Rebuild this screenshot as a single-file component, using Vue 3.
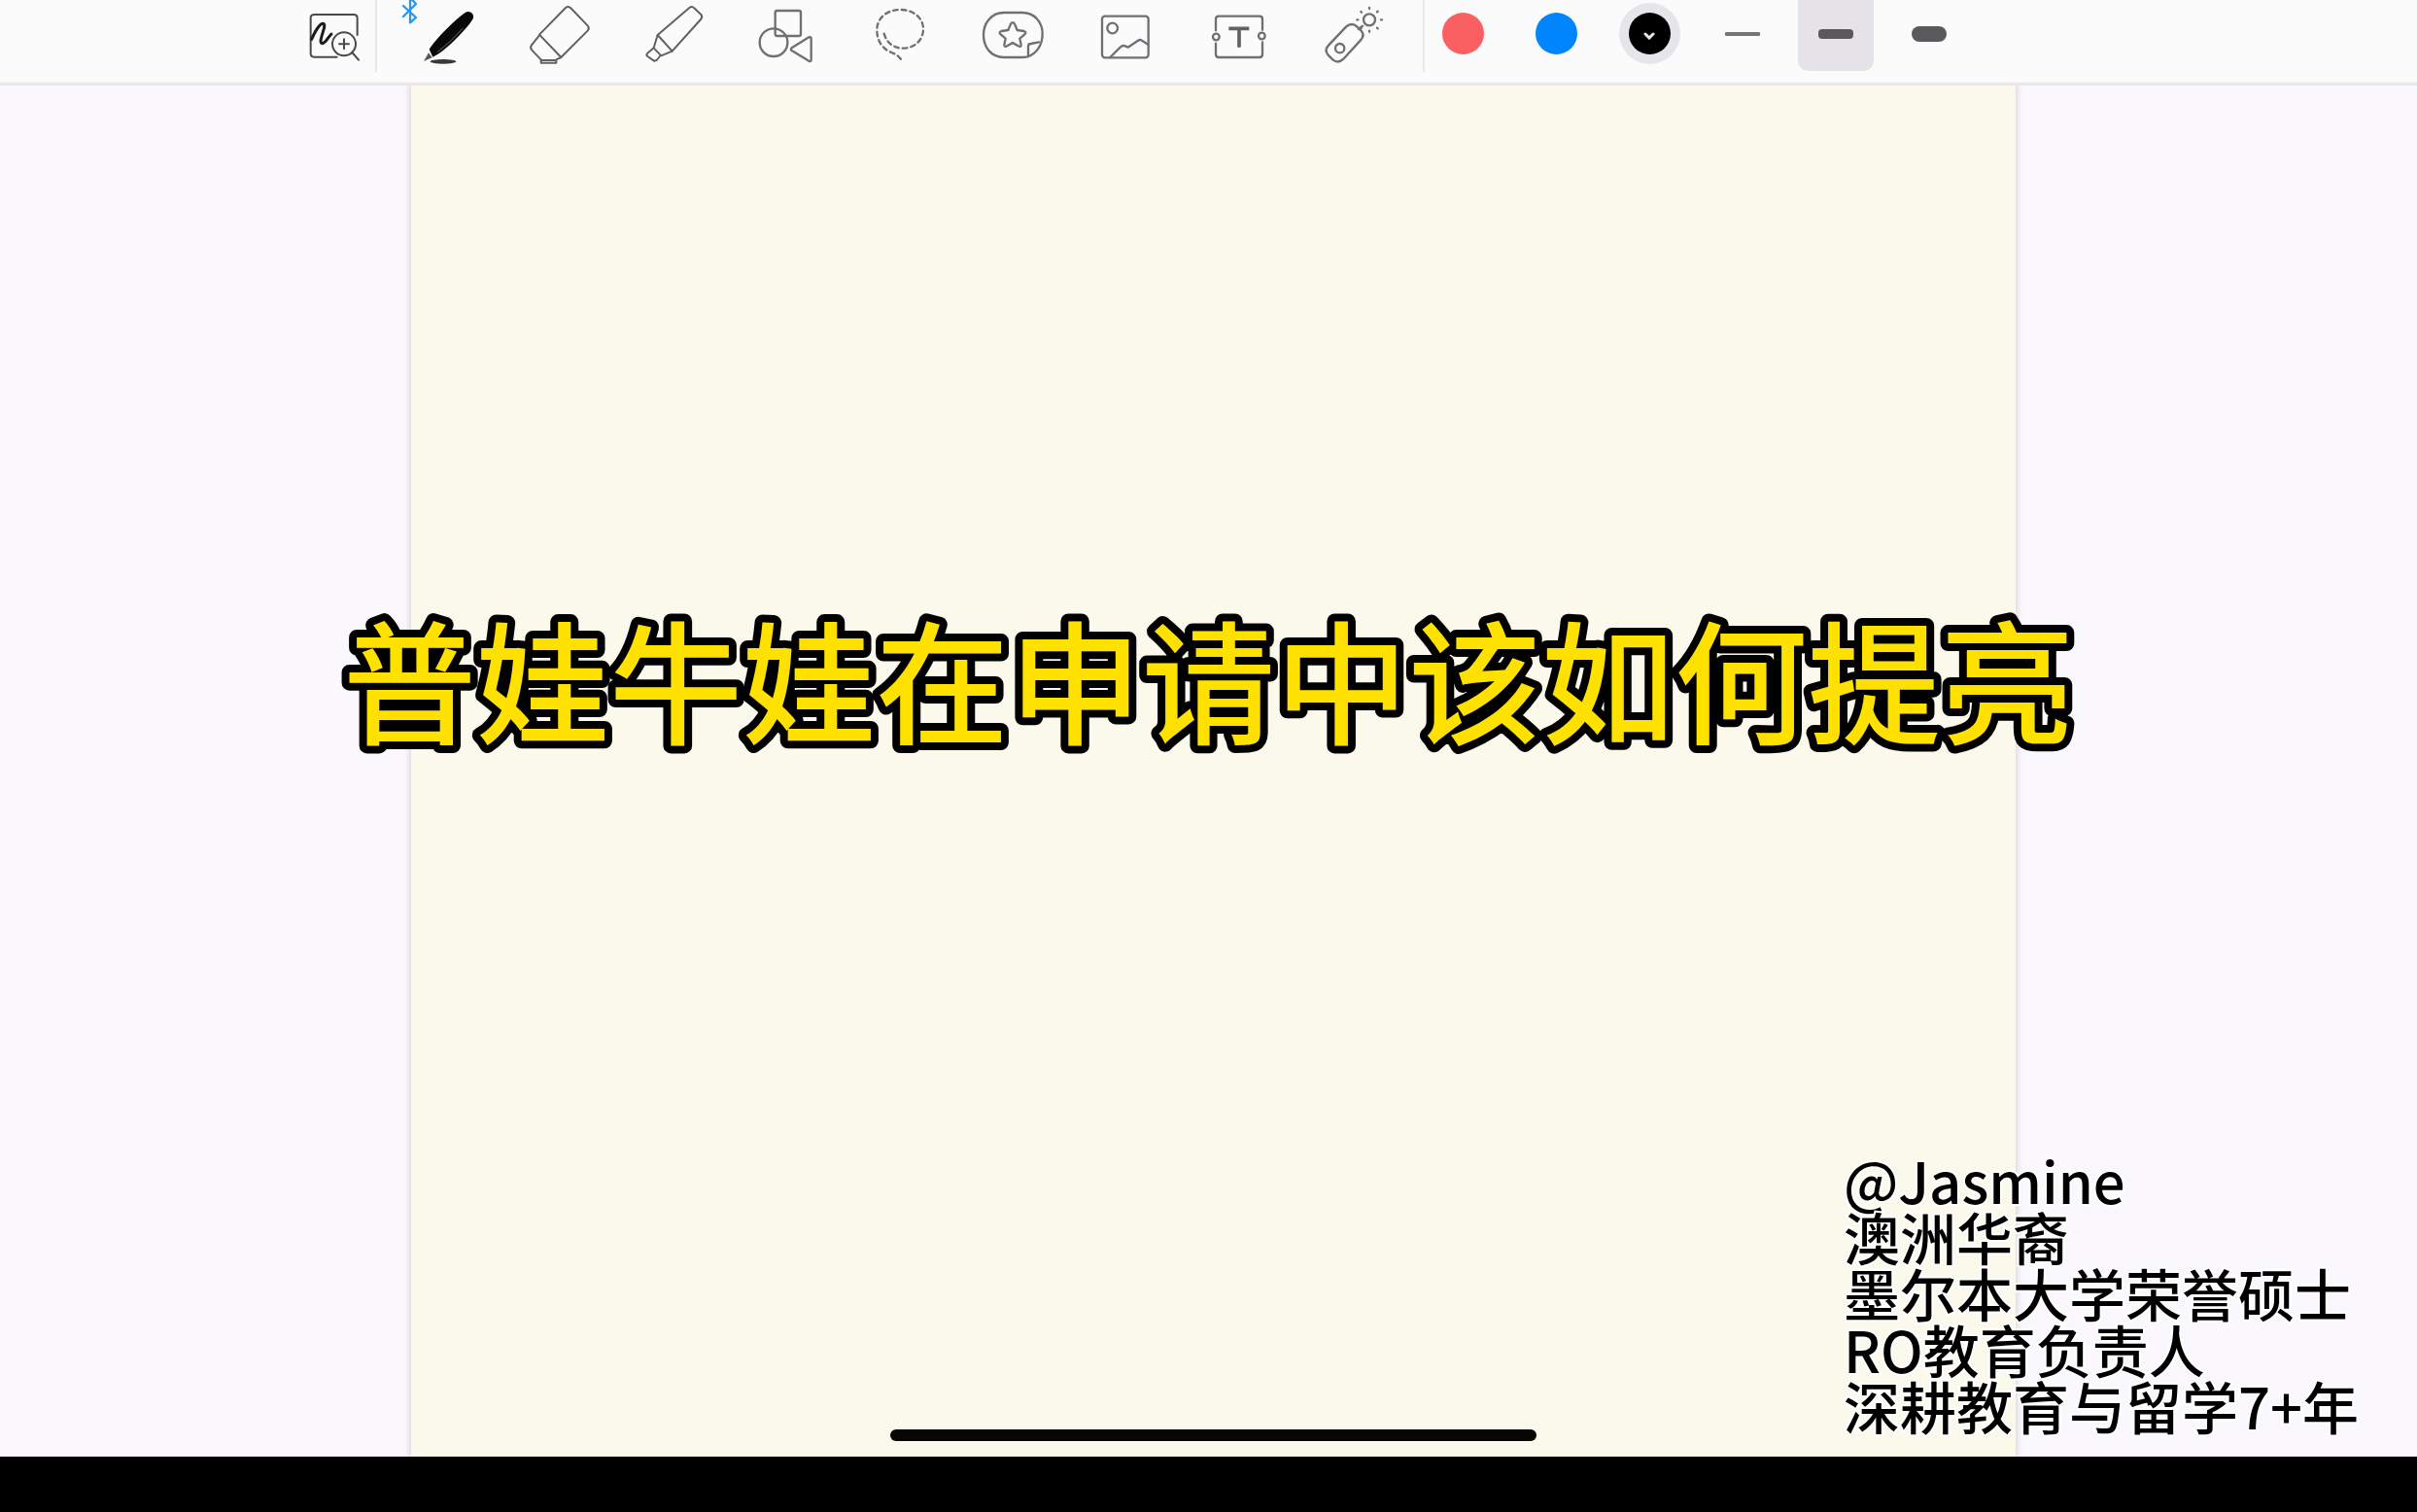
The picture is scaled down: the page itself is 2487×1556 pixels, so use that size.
<script setup>
import { ref } from 'vue'

const title = '普娃牛娃在申请中该如何提亮'
const credits = ['@Jasmine', '澳洲华裔', '墨尔本大学荣誉硕士', 'RO教育负责人', '深耕教育与留学7+年'].join('\n')

const colors = [
  { name: 'Red', value: '#fa5f62' },
  { name: 'Blue', value: '#0085ff' },
  { name: 'Black', value: '#000000' },
]
const widths = [
  { name: 'Thin', cls: 'thin' },
  { name: 'Medium', cls: 'medium' },
  { name: 'Thick', cls: 'thick' },
]
const color = ref('Black')
const width = ref('Medium')
</script>

<template>
  <div class="app">
    <header class="toolbar">
      <button class="zoom-tool" type="button" aria-label="Zoom window">
        <svg class="icon dark" viewBox="9 0 300 252">
          <path d="M233 108V56Q233 45 222 45H100Q89 45 89 56V165Q89 176 100 176H170" />
          <path class="ink" d="M92 121C102 98 117 73 127 73C143 74 109 130 124 134C135 135 139 119 153 105" />
          <circle cx="192" cy="136" r="36" />
          <path d="M192 121V151M177 136H207M217 162L237 185" />
        </svg>
      </button>

      <nav class="tools" aria-label="Drawing tools">
        <button type="button" aria-label="Pen">
          <svg class="icon" viewBox="363 0 300 252">
            <path class="bluetooth" d="M375 18L414 54L396 70V-8L414 12L375 51" />
            <path class="solid" d="M566 39C578 30 597 43 590 58C583 75 520 143 484 166L466 176L455 152C480 115 530 65 566 39Z" />
            <path class="shine" d="M482 160C510 138 535 114 558 88" />
            <path class="nib" d="M453 163L464 178L438 189Z" />
            <ellipse class="shade" cx="498" cy="190" rx="40" ry="7" />
          </svg>
        </button>
        <button type="button" aria-label="Eraser">
          <svg class="icon" viewBox="713 0 300 252">
            <path d="M797 107L878 24Q885 18 893 24L946 79Q953 87 946 95L864 177Z" />
            <path d="M797 109L773 139Q767 147 774 155L802 184V194H849V184L864 177M802 186H849" />
          </svg>
        </button>
        <button type="button" aria-label="Highlighter">
          <svg class="icon" viewBox="12 0 300 252">
            <path d="M110 108L208 24Q216 18 223 25L244 45Q250 52 243 60L155 158Z" />
            <path d="M110 108L98 148L121 172L155 158M98 148L78 165Q74 170 79 174L99 188L107 186L119 171" />
          </svg>
        </button>
        <button type="button" aria-label="Shapes">
          <svg class="icon thicker" viewBox="362 0 300 252">
            <rect x="475" y="33" width="79" height="78" rx="6" />
            <circle cx="470" cy="131" r="43" />
            <path d="M526 148L579 115Q586 112 586 120V184Q586 192 579 188L526 156Q521 152 526 148Z" />
          </svg>
        </button>
        <button type="button" aria-label="Lasso">
          <svg class="icon thicker" viewBox="711 0 300 252">
            <path class="dashed" d="M812 104C820 133 843 149 870 149C908 149 933 122 933 90C933 54 902 30 862 30C820 30 790 56 790 93C790 126 807 151 835 162C851 168 861 176 869 191" />
          </svg>
        </button>
        <button type="button" aria-label="Stickers">
          <svg class="icon thicker" viewBox="40 0 300 252">
            <path d="M233 175Q225 177 212 177H160C120 177 97 145 97 108C97 71 122 39 160 39H217C255 39 279 69 279 104C279 140 260 166 233 175Z" />
            <path d="M235 173V143Q235 135 243 135L268 130" />
            <path d="M181 74Q187 65 193 74L201 93L222 96Q231 99 224 106L209 119L213 138Q213 147 204 142L187 132L170 142Q161 147 161 138L165 119L150 106Q143 99 152 96L173 93Z" />
          </svg>
        </button>
        <button type="button" aria-label="Image">
          <svg class="icon thicker" viewBox="390 0 300 252">
            <rect x="465" y="50" width="143" height="128" rx="9" />
            <circle cx="497" cy="87" r="16" />
            <path d="M490 177L521 146Q529 139 536 142L545 146L576 125Q582 121 588 125L607 137" />
          </svg>
        </button>
        <button type="button" aria-label="Text">
          <svg class="icon thicker" viewBox="739 0 300 252">
            <path d="M814 94V59Q814 50 823 50H949Q958 50 958 59V92M958 130V168Q958 177 949 177H823Q814 177 814 168V134" />
            <circle cx="815" cy="114" r="10" />
            <circle cx="956" cy="111" r="10" />
            <path class="letter" d="M854 88H917M886 88V146" />
          </svg>
        </button>
        <button type="button" aria-label="Laser pointer">
          <svg class="icon thicker" viewBox="1088 0 300 252">
            <path d="M1217 83Q1233 69 1248 80L1264 95Q1276 109 1262 124L1209 182Q1193 198 1176 184L1162 170Q1149 155 1163 140Z" />
            <path d="M1256 90L1268 80" />
            <circle cx="1198" cy="149" r="14" />
            <circle cx="1289" cy="61" r="18" />
            <path class="rays" d="M1289 24V27M1289 95V98M1251 61H1254M1325 61H1328M1263 36L1265 38M1313 86L1315 88M1315 35L1313 37M1265 85L1263 87" />
          </svg>
        </button>
      </nav>

      <div class="presets">
        <button
          v-for="c in colors"
          :key="c.name"
          type="button"
          class="preset"
          :aria-label="c.name"
          :aria-pressed="color === c.name"
          @click="color = c.name"
        >
          <span class="swatch" :class="{ picked: color === c.name }" :style="{ backgroundColor: c.value }">
            <svg v-if="color === c.name" class="chevron" viewBox="0 0 12 8"><path d="M2 2L6 6L10 2" /></svg>
          </span>
        </button>
        <button
          v-for="w in widths"
          :key="w.name"
          type="button"
          class="preset"
          :class="{ active: width === w.name }"
          :aria-label="w.name"
          :aria-pressed="width === w.name"
          @click="width = w.name"
        >
          <span class="stroke" :class="w.cls"></span>
        </button>
      </div>
    </header>

    <main class="stage">
      <section class="paper">
        <div class="home-indicator"></div>
      </section>
      <h1 class="title">
        <svg class="title-art">
          <text x="50%" y="150" text-anchor="middle">{{ title }}</text>
        </svg>
      </h1>
      <p class="credits">{{ credits }}</p>
    </main>

    <footer class="letterbox"></footer>
  </div>
</template>

<style>
body {
  margin: 0;
  background: #000;
}
</style>

<style scoped>
.app {
  display: flex;
  flex-direction: column;
  min-height: 100vh;
  overflow: hidden;
  background: #faf8fc;
  font-family: "Noto Sans CJK SC", sans-serif;
}

.toolbar {
  display: flex;
  height: 85px;
  padding-left: 12%;
  background: #fcfbfc;
  border-bottom: 3px solid #eae8ea;
}

button {
  display: flex;
  justify-content: center;
  padding: 0;
  border: 0;
  background: none;
  cursor: pointer;
}

.zoom-tool {
  position: relative;
  width: 90px;
}

.zoom-tool::after,
.presets::before {
  content: "";
  position: absolute;
  top: 0;
  right: 0;
  width: 2px;
  height: 74px;
  background: #e8e7ea;
}

.tools {
  display: flex;
  width: 1048px;
  margin-left: 14px;
}

.tools button {
  flex: 1;
}

.icon {
  flex: none;
  width: 100px;
  height: 84px;
  fill: none;
  stroke: #626064;
  stroke-width: 6;
  stroke-linecap: round;
  stroke-linejoin: round;
}

.icon.dark {
  stroke: #4a494c;
}

.icon.thicker {
  stroke: #716f74;
  stroke-width: 7;
}

.icon .ink {
  stroke: #1c1c1d;
  stroke-width: 9;
}

.icon .bluetooth {
  stroke: #2f95e6;
  stroke-width: 7;
}

.icon .solid {
  fill: #09090a;
  stroke: none;
}

.icon .shine {
  stroke: #454446;
  stroke-width: 4;
}

.icon .nib {
  fill: #59585b;
  stroke: none;
}

.icon .shade {
  fill: #39383a;
  stroke: none;
}

.icon .dashed {
  stroke-dasharray: 14 12;
}

.icon .letter {
  stroke: #626064;
  stroke-width: 11;
  stroke-linecap: butt;
}

.presets {
  position: relative;
  display: flex;
  gap: 18px;
  margin-left: 16px;
}

.presets::before {
  right: auto;
  left: -2px;
}

.preset {
  align-items: center;
  width: 78px;
  height: 73px;
  padding-bottom: 4px;
  box-sizing: border-box;
  border-radius: 0 0 10px 10px;
}

.preset.active {
  background: #e5e3e8;
}

.swatch {
  display: flex;
  align-items: center;
  justify-content: center;
  width: 43px;
  height: 43px;
  border-radius: 50%;
}

.swatch.picked {
  box-shadow: 0 0 0 10px #e7e5e9;
}

.chevron {
  width: 12px;
  height: 8px;
  margin-top: 4px;
  fill: none;
  stroke: #e8e8e8;
  stroke-width: 3;
  stroke-linecap: round;
}

.stroke {
  width: 36px;
  background: #5a585c;
}

.thin {
  height: 4px;
  border-radius: 1px;
  background: #77757a;
}

.medium {
  height: 10px;
  border-radius: 4px;
}

.thick {
  height: 16px;
  border-radius: 8px;
}

.stage {
  position: relative;
  display: flex;
  flex: 1;
}

.paper {
  display: flex;
  flex: 0 0 66.4%;
  align-items: flex-end;
  justify-content: center;
  margin-left: 17%;
  background: #fbf9ec;
  box-shadow: 0 0 6px 2px #d9d8dc;
  clip-path: inset(0 -10px);
}

.home-indicator {
  width: 40.3%;
  height: 12px;
  margin-bottom: 16px;
  border-radius: 6px;
  background: #080502;
}

.title {
  position: absolute;
  top: 518px;
  right: 0;
  left: 0;
  margin: 0;
  font-size: 137px;
  font-weight: 500;
}

.title-art {
  display: block;
  width: 100%;
  height: 200px;
  overflow: visible;
  fill: #ffe100;
  stroke: #000;
  stroke-width: 16px;
  stroke-linejoin: round;
  paint-order: stroke fill;
}

.credits {
  position: absolute;
  right: 60px;
  bottom: 24px;
  margin: 0;
  color: #000;
  font-size: 58px;
  font-weight: 500;
  line-height: 58px;
  white-space: pre;
  -webkit-text-stroke: 4px #fff;
  paint-order: stroke fill;
}

.letterbox {
  height: 57px;
  background: #000;
}
</style>
